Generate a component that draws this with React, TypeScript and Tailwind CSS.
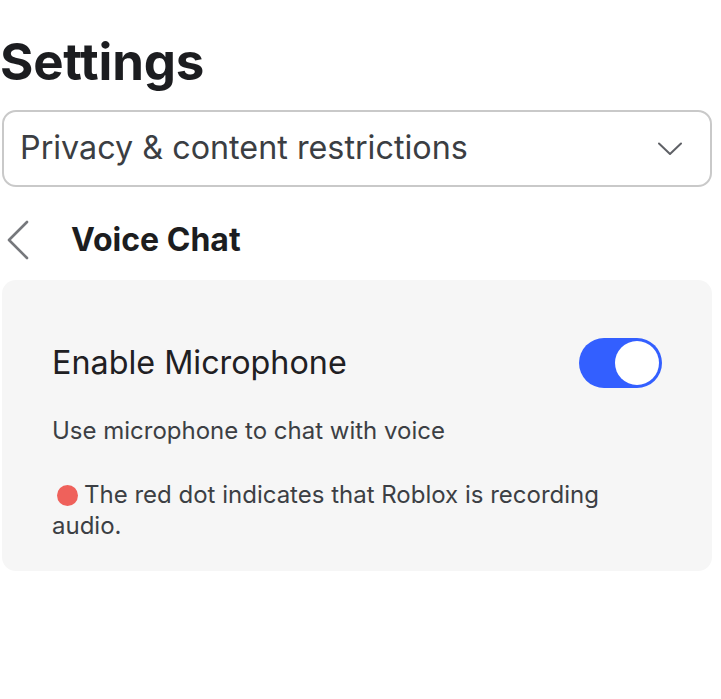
export default function App() {
  return (
    <div className="min-h-[699px] w-[721px] bg-white font-['Inter',sans-serif] text-[#1f2023]">
      <div className="pl-[2px] pr-[9px] pt-[30px]">
        {/* Title */}
        <h1 className="-ml-[2px] text-[51px] font-bold leading-[64px] tracking-[-0.2px] text-[#1c1d20]">
          Settings
        </h1>

        {/* Category select */}
        <div className="mt-[16px] flex h-[77px] items-center justify-between rounded-[14px] border-2 border-[#c9c9c9] pl-[16px] pr-[28px]">
          <span className="text-[32.3px] text-[#3b3e43]">Privacy &amp; content restrictions</span>
          <svg width="24" height="14" viewBox="0 0 24 14" fill="none" stroke="#5f6166" strokeWidth="2" strokeLinecap="round" strokeLinejoin="round">
            <polyline points="1,1.5 12,12 23,1.5" />
          </svg>
        </div>

        {/* Back header */}
        <div className="mt-[33px] flex h-[40px] items-center">
          <svg className="ml-[5px]" width="24" height="40" viewBox="0 0 24 40" fill="none" stroke="#76787c" strokeWidth="2.6" strokeLinecap="round" strokeLinejoin="round">
            <polyline points="20,2 2,20 20,38" />
          </svg>
          <span className="ml-[40px] text-[32px] font-bold text-[#1c1d20]">Voice Chat</span>
        </div>

        {/* Card */}
        <div className="mt-[20px] h-[291px] rounded-[14px] bg-[#f6f6f6] pl-[50px] pr-[50px] pt-[58px]">
          <div className="flex items-center justify-between">
            <span className="text-[32.3px] text-[#1f2023]">Enable Microphone</span>
            <div className="flex h-[50px] w-[83px] items-center justify-end rounded-full bg-[#335fff] pr-[3px]">
              <div className="h-[44px] w-[44px] rounded-full bg-white" />
            </div>
          </div>
          <p className="mt-[27px] text-[24px] leading-[32px] text-[#3c3f44]">Use microphone to chat with voice</p>
          <p className="mt-[32px] text-[24px] leading-[31px] text-[#3c3f44]">
            <span className="mr-[6px] ml-[5px] inline-block h-[21px] w-[21px] translate-y-[3px] rounded-full bg-[#ef615b]" />
            The red dot indicates that Roblox is recording audio.
          </p>
        </div>
      </div>
    </div>
  );
}
